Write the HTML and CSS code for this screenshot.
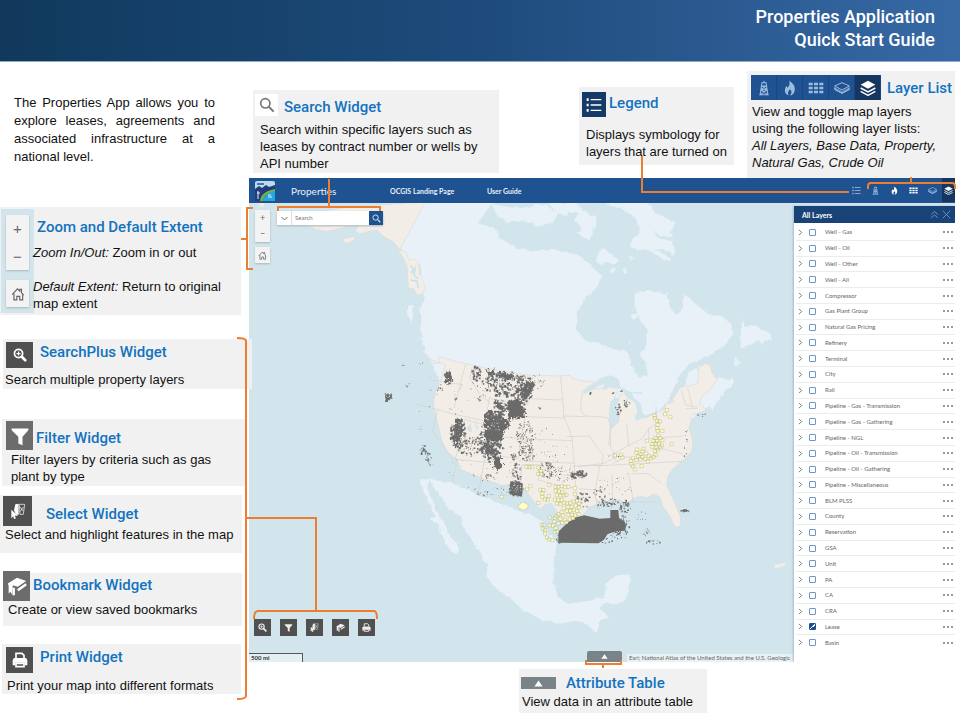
FILE: index.html
```html
<!DOCTYPE html>
<html lang="en">
<head>
<meta charset="utf-8">
<title>Properties Application Quick Start Guide</title>
<link rel="stylesheet" href="styles.css">
</head>
<body>
<svg class="symbols" aria-hidden="true">
  <symbol id="i-search" viewBox="0 0 24 24"><circle cx="9.500" cy="9.500" r="7" fill="none" stroke="currentColor" stroke-width="2.500"/><path d="M15 15l7 7" stroke="currentColor" stroke-width="3"/></symbol>
  <symbol id="i-zoomplus" viewBox="0 0 24 24"><circle cx="9.500" cy="9.500" r="7" fill="none" stroke="currentColor" stroke-width="3"/><path d="M15 15l6 6" stroke="currentColor" stroke-width="4.500" stroke-linecap="round"/><path d="M9.500 6v7M6 9.500h7" stroke="currentColor" stroke-width="2"/></symbol>
  <symbol id="i-filter" viewBox="0 0 24 24"><path d="M2 3h20v2l-7 8v10l-5-2v-8L2 5z" fill="currentColor"/></symbol>
  <symbol id="i-select" viewBox="0 0 24 24"><path d="M8 2l5-1v17l-4-1-3-6zM2 10l10 9-5 0 2 4-3 1-1-4-3 3z" fill="currentColor"/><path d="M14 2h8l-2 15h-5zM15 6l5 6M20 6l-5 7" fill="none" stroke="currentColor" stroke-width="1.500" opacity=".7"/></symbol>
  <symbol id="i-bookmark" viewBox="0 0 24 24"><path d="M1 9l11-7 11 4-10 7-6-2-1 11-2-3-2 2V12z" fill="currentColor"/><path d="M8 14v9M13 17l10-7" fill="none" stroke="currentColor" stroke-width="3"/></symbol>
  <symbol id="i-print" viewBox="0 0 24 24"><path d="M6 9V2h9l3 3v4" fill="none" stroke="currentColor" stroke-width="2.500"/><path d="M3 9h18l2 3v8h-4v-4H5v4H1v-8z" fill="currentColor"/><path d="M6 17h12v5H6z" fill="none" stroke="currentColor" stroke-width="2.500"/></symbol>
  <symbol id="i-home" viewBox="0 0 24 24"><path d="M2 13L11 3l4 4V4h3v6l4 4M5 11v11h5v-6h5v6h5V12" fill="none" stroke="currentColor" stroke-width="2"/></symbol>
  <symbol id="i-list" viewBox="0 0 24 24"><path d="M7 4h16M7 12h16M7 20h16" stroke="currentColor" stroke-width="2"/><path d="M1 2h3v4H1zM1 10h3v4H1zM1 18h3v4H1z" fill="currentColor"/></symbol>
  <symbol id="i-tower" viewBox="0 0 24 24"><path d="M9 4L6 23M15 4l3 19M7 22l9-7-8-1 7-5H9M17 22l-9-7 8-1-7-5M8 4h8M12 1v4M5 22h14" fill="none" stroke="currentColor" stroke-width="1.600"/></symbol>
  <symbol id="i-flame" viewBox="0 0 24 24"><path d="M11 1c7 5 9 9 8 15-1 5-4 7-7 7 3-3 3-6 0-9-3 3-4 6-2 9-4-1-7-5-5-11 1-4 3-3 3 0 3-3 4-6 3-11z" fill="currentColor"/></symbol>
  <symbol id="i-grid" viewBox="0 0 24 24"><path d="M1 4h6v4H1zM9 4h6v4H9zM17 4h6v4h-6zM1 10h6v4H1zM9 10h6v4H9zM17 10h6v4h-6zM1 16h6v4H1zM9 16h6v4H9zM17 16h6v4h-6z" fill="currentColor"/></symbol>
  <symbol id="i-slab" viewBox="0 0 24 24"><path d="M1 9l11-5 11 5-11 6zM1 11v3l11 6 11-6v-3M1 14l11 6 11-6" fill="none" stroke="currentColor" stroke-width="1.500"/><path d="M1 11l11 6 11-6v3l-11 6-11-6z" fill="currentColor" opacity=".6"/></symbol>
  <symbol id="i-layers" viewBox="0 0 24 24"><path d="M1 7l11-6 11 6-11 6z" fill="currentColor"/><path d="M1 12l11 6 11-6M1 17l11 6 11-6" fill="none" stroke="currentColor" stroke-width="2.200"/></symbol>
  <symbol id="i-up" viewBox="0 0 24 24"><path d="M12 4l11 16H1z" fill="currentColor"/></symbol>
  <symbol id="i-chev" viewBox="0 0 24 24"><path d="M7 3l9 9-9 9" fill="none" stroke="currentColor" stroke-width="3"/></symbol>
  <symbol id="i-down" viewBox="0 0 24 24"><path d="M2 7l10 10L22 7" fill="none" stroke="currentColor" stroke-width="3"/></symbol>
  <symbol id="i-collapse" viewBox="0 0 24 24"><path d="M3 12l9-8 9 8M3 21l9-8 9 8" fill="none" stroke="currentColor" stroke-width="2"/></symbol>
  <symbol id="i-close" viewBox="0 0 24 24"><path d="M2 2l20 20M22 2L2 22" stroke="currentColor" stroke-width="2"/></symbol>
</svg>

<header class="banner"><h1>Properties Application<br>Quick Start Guide</h1></header>

<main class="guide">
  <section class="left">
    <p class="intro">The Properties App allows you to explore leases, agreements and associated infrastructure at a national level.</p>
    <article class="card card-zoom">
      <div class="tools">
        <span class="pair"><span>+</span><span>−</span></span>
        <span class="house"><svg class="s14"><use href="#i-home"/></svg></span>
      </div>
      <div class="words">
        <h2>Zoom and Default Extent</h2>
        <p><em>Zoom In/Out:</em> Zoom in or out</p>
        <p class="later"><em>Default Extent:</em> Return to original map extent</p>
      </div>
    </article>
    <article class="card card-plus">
      <div class="head"><span class="tile"><svg class="s14"><use href="#i-zoomplus"/></svg></span><h2>SearchPlus Widget</h2></div>
      <p>Search multiple property layers</p>
    </article>
    <article class="card card-filter">
      <div class="head"><span class="tile soft"><svg class="s20"><use href="#i-filter"/></svg></span><h2>Filter Widget</h2></div>
      <p>Filter layers by criteria such as gas plant by type</p>
    </article>
    <article class="card card-select">
      <div class="head"><span class="tile"><svg class="s16"><use href="#i-select"/></svg></span><h2>Select Widget</h2></div>
      <p>Select and highlight features in the map</p>
    </article>
    <article class="card card-book">
      <div class="head"><span class="tile soft"><svg class="s20"><use href="#i-bookmark"/></svg></span><h2>Bookmark Widget</h2></div>
      <p>Create or view saved bookmarks</p>
    </article>
    <article class="card card-print">
      <div class="head"><span class="tile"><svg class="s16"><use href="#i-print"/></svg></span><h2>Print Widget</h2></div>
      <p>Print your map into different formats</p>
    </article>
  </section>

  <section class="right">
    <div class="top">
      <article class="card card-search">
        <div class="head"><span class="white"><svg class="s16"><use href="#i-search"/></svg></span><h2>Search Widget</h2></div>
        <p>Search within specific layers such as leases by contract number or wells by API number</p>
      </article>
      <article class="card card-legend">
        <div class="head"><span class="navy"><svg class="s16"><use href="#i-list"/></svg></span><h2>Legend</h2></div>
        <p>Displays symbology for layers that are turned on</p>
      </article>
      <article class="card card-layers">
        <div class="head">
          <span class="strip"><span><svg class="s16"><use href="#i-tower"/></svg></span><span><svg class="s16"><use href="#i-flame"/></svg></span><span><svg class="s16"><use href="#i-grid"/></svg></span><span><svg class="s16"><use href="#i-slab"/></svg></span><span class="on"><svg class="s16"><use href="#i-layers"/></svg></span></span>
          <h2>Layer List</h2>
        </div>
        <p>View and toggle map layers<br>using the following layer lists:<br><em>All Layers, Base Data, Property,<br>Natural Gas, Crude Oil</em></p>
      </article>
    </div>

    <div class="app">
      <div class="appbar">
        <svg class="logo" viewBox="0 0 20 20"><rect width="20" height="20" rx="2" fill="#b9dcf0"/><path d="M0 8l4-3 3 2 4-3 3 2 6-2v5L9 20H0z" fill="#243c7c"/><path d="M8 20c1-6 6-9 12-11v11z" fill="#23a9df"/><path d="M5 20c1-8 7-10 15-12v2C13 12 9 14 8 20z" fill="#69b545"/><path d="M3 10v8M2 12h3M13 16h4M13 14h3" stroke="#e6f4fb"/><path d="M2 3h7" stroke="#4a78aa" stroke-width="2"/></svg>
        <span class="brand">Properties</span>
        <a href="#landing" class="landing">OCGIS Landing Page</a>
        <a href="#user-guide">User Guide</a>
        <nav class="icons" aria-label="Map panels">
          <button aria-label="Legend"><svg class="s9"><use href="#i-list"/></svg></button>
          <button aria-label="Crude Oil"><svg class="s9"><use href="#i-tower"/></svg></button>
          <button aria-label="Natural Gas" class="lit"><svg class="s9"><use href="#i-flame"/></svg></button>
          <button aria-label="Property" class="lit"><svg class="s9"><use href="#i-grid"/></svg></button>
          <button aria-label="Base Data"><svg class="s9"><use href="#i-slab"/></svg></button>
          <button aria-label="All Layers" class="lit on"><svg class="s9"><use href="#i-layers"/></svg></button>
        </nav>
      </div>

      <div class="map">
        <svg class="canvas" viewBox="249 203 706 459" preserveAspectRatio="xMinYMin slice" role="img" aria-label="Map of leases in North America">
          <defs>
            <filter id="coast" x="-5%" y="-5%" width="110%" height="110%"><feTurbulence type="fractalNoise" baseFrequency=".05" numOctaves="3" seed="4"/><feDisplacementMap in="SourceGraphic" scale="14" xChannelSelector="R" yChannelSelector="G"/></filter>
            <filter id="ragged" x="-5%" y="-5%" width="110%" height="110%"><feTurbulence type="fractalNoise" baseFrequency=".09" numOctaves="3" seed="9"/><feDisplacementMap in="SourceGraphic" scale="26" xChannelSelector="R" yChannelSelector="G"/></filter>
          </defs>
          <rect x="249" y="203" width="1400" height="900" fill="#d3e5ec"/>
          <g transform="translate(380 200) scale(.33333)" fill="#e8f1f7">
            <g filter="url(#coast)">
            <path d="M135 5L62 147l16 22 12 35 30-14 14 96-8 30-8 12 6 34-2 28 10 32 2 36 28 44 60 160 640-40 20-20 30-45 12-35 30-22 30-5 3 26 20 14 34 2 20-2-4 16-24 26-38 54-6-12-12 4-80 60-60-20 45-100 26-50 26-24 60-24 50-40 17-28-14-32-24-16-36-4-32-26-42-34-6 46-18 14-20-24-6-40-60-8-36 6-4 34 16 44 24 36-4 44-20 22 22 44 2 28-24-2-28-36-6-38-40-4-40-20-52-12-26-34 4-48 28-48 28-22 20-40-20-14-16-20-60-36-24-4-60-6-14 6-60-8-24-14-24-10-10-24-20-14z"/>
            <path d="M334 8l40 12 50 4 70-12 40 30-18 26-40 12-36-16-60 2-34-28zM500 8h90l20 26 42 16-20 70-40-20-10-44-46-16zM650 5h150l36 40 50 22-14 34 14 54-18 30-52-30-66-10 6-28 22-16v-26l-24-30-34-20zM655 160l20-16 18 18 24 20-16 10-24-6-12 14-14-20zM692 206l14-4 4 10-16 8zM728 210l10-6 2 18-8 2zM742 166l22 6-8 8zM84 318l16-2 0 24-10 30-6-30zM120 410l24 20 20 40 12 18-22-16-26-36zM1092 350l4 30 30-4 18 12 24 10 4 26-18-4-8 16-8-14-16 10-40 10-2-30zM994 428h40l-4 6-36-2zM1066 470l8 12 10 2-16 16-6-12zM755 346l14-6 6 8-12 10zM745 424l12 4-8 8z"/>
            <path d="M560 40l34-4-8 22 20 28-10 10-34-24zM820 96l30 14 36 8-10 6-40-10zM820 146l50 8 20 28-24-10zM610 138l30 12-12 2z" fill="#d3e5ec"/>
            <path d="M1016 332l14-18-6 20zM520 70l-10 34-6-28zM445 84l-4 26-8-24z" fill="#d3e5ec"/>
            </g>
            <path d="M135 5L62 147l30 30 80 20L300 60 340 5z"/>
          </g>
          <g transform="translate(240 80) scale(.33333)" fill="#f2eee7" stroke="#d9d9d6" stroke-width="1.500">
            <path d="M556 365L480 508l-22-24-30-16-16-18-26 4-26 8-14-10 10-16-36 4-30 8-34 6-30-6-26-14-34-12-18-6 50-16 130-18z"/>
            <path d="M310 476l30-6 8 6-24 14-14-4zM45 365l24 2 8 8-12 8-8-10zM96 404l8 2-4 6z"/>
            <path d="M472 508l26 8 10 26 16-6 12 14 2 30 14 30 2 18-12 16-14-2-6-16-16 0-4-40 0-26-14-30z"/>
            <path d="M512 555l8 14-6 12M526 560l-4 26 12 10M512 600l20 4 2 20" fill="none" stroke="#c4dde6" stroke-width="4"/>
          </g>
          <g transform="translate(420 480) scale(.33333)" fill="#e8f1f7">
            <g filter="url(#coast)">
            <path d="M52 0l44 10 130 55 130 50 54 75-8 55-2 60 14 44 30 22 60-8 50-12 4-40 14-18 56-12 4 24-10 38-6 18-30 12-36-4-10 12 4 14 24 16-30 12-8 34-14-10-26-20-26-4-40 8-60-12-62-34-36-34-40-26-26-38 2-30-18-36-46-66-20-46-32-20-18-34-22-26-20-30-4 24 20 50 14 34 20 26 6 22 18 24 16 34-12 10-22-26-22-38-4-24-28-18 20-4-18-40-20-40-10-36z"/>
            </g>
            <path d="M1062 256l32-8 2 8-30 10z" fill="#f2eee7"/>
          </g>
          <g transform="translate(370 340) scale(.33333)">
            <path d="M172 55l20 16 16-2-2-20 44 14 100 22 80 13 50 8 90 2 30-2 8 10 34 8 34 2-20 12-18 16 30-6 28-4 24-8 6 8 14-6 26 10-26 10-14 32-8 28 6 24 10 12 12-8 2-26-6-32 8-24 20-8 24 6 10 28 10 20-4 20 18 4 38-20 10-22 36-4-4-10 22-36 34-6 20-6 2-46 20-14 16 8 4 20 16 22-26 34-20 14-8 24 22 18-16 6-30 8-2 24-6 14 10 30 2 24-4 20-24 24-30 26-16 22-4 26 24 54 18 44-2 30-16-2-16-34-20-28-8-26-18-10-24 12-12-6-30 8-14 18-26-16-30 4-26 6-32 14-34 40 0 30-20 6-20-18-16-34-24-36-20 4-14 14-20-26-24-32-14-18-58 4-76-28-46-20-12-30-28-22-16-32-26-108 6-40 16-32 14-50z" fill="#f2eee7" stroke="#d4d4d2" stroke-width="1.500"/>
            <path d="M672 130l20-16 30-8 24 10 6 32-34-6-22 10 8-20-20 6-22 16-26 10 10-18zM722 184l14-12 14 6-12 24 0 28 0 24-12 12-8-12-2-30zM754 146l30 10 30 0 22 36 26-2-8 26-30 16-26 12-4-12 8-16-8-30-22-12zM840 206l50-18-4 20-40 18z" fill="#d3e5ec"/>
            <path d="M786 158l40 6 12 28 50-4-20 24-40 14-10-6-6-30-20-16z" fill="#e8f1f7"/>
            <path d="M172 104l16 16 90 14-10 18M286 74l-18 70-16 60M135 190l115 32 110 24M203 210l-16 62 72 102-12 50M360 170l-18 84-58-16M284 238l-28 120 106 10M362 246l-20 122-18 102M306 82l-6 32 30 50 30 24M360 176l114 18 0-88M474 176l104 4M464 230l120 4M464 234l-10 62-104-10M454 296l154 6M454 296l-10 60-82-12M444 362l170 8M456 374l-8 96-60-6M456 374h50l0 46 50 14 60 10M572 106l10 124 24 60 10 130 2 70M636 160l-4 50 14 20-66-2M646 228l66 4 12 24-8 60M590 290l70-2 20 34 20 24-4 30-86 2M720 256l2 70 20 24-40 20-80 10M770 250l6 66 40-20 20-30 22-14M776 316l-52 30 20 22M676 378l260-14M728 370l40-20 70 10 30-36 70 18M836 266l0 30 104-8M858 200l2 72M690 376l-16 82 10 50M776 400l14 86-50 4M726 404l2 86M626 446l48 4M788 486h74M784 402l50-2 40 30M934 150l12 44 36 8M954 146l14 60M946 206h38" fill="none" stroke="#d2d1d0" stroke-width="2"/>
            <path d="M292 262l10-10 4 24-10-2zM314 238l6 18 8 8-10 2z" fill="#cfe3ed"/>
            <g fill="#6b6b6b">
              <path d="M565 575l24-24 24-18 30-7 46 10 32-2 0-24 24 0 2 24 18 12 2 26-28 2-26 8-12 18-16 10-120-2z"/>
              <path filter="url(#ragged)" d="M342 222l22-14 10 16 28 8 18 8-2 20-16 8-4 30-24-2-22 4-14-10 10-16 20-6-28-6zM416 182l38-2 12 50-26 8-26-6-2-26zM376 176l24 22 10 16-26-8zM380 96l52 6-4 16-40-8zM346 88l30 4-6 18-20-6zM350 284l40 4 0 16-40 0zM346 304l24 8 10 38-28-4zM368 348l28 4 0 34-24-4zM258 240l20-2 2 34-18 46-18-18 4-34zM460 130l34-4-12 36-20 14-8-20zM228 94l12-2 4 28-14 14zM44 164l18-4 0 14-14 6z"/>
              <path d="M421 424l37 6-2 40-38-8zM935 511l8-4 12 4-4 5-14-2z"/>
            </g>
            <path id="gaps" fill="#f2eee7"/>
            <path id="specks" fill="#6b6b6b"/>
            <path id="units" fill="#ffffc4" stroke="#9a9a72" stroke-width="1"/>
          </g>
        </svg>

        <div class="zoomer"><button aria-label="Zoom in">+</button><button aria-label="Zoom out">−</button></div>
        <button class="homebtn" aria-label="Default extent"><svg class="s9"><use href="#i-home"/></svg></button>
        <form class="finder">
          <button type="button" aria-label="Search sources"><svg class="s7"><use href="#i-down"/></svg></button>
          <input type="text" placeholder="Search" aria-label="Search">
          <button type="button" class="go" aria-label="Search"><svg class="s9"><use href="#i-search"/></svg></button>
        </form>
        <div class="dock">
          <button aria-label="SearchPlus"><svg class="s9"><use href="#i-zoomplus"/></svg></button>
          <button aria-label="Filter"><svg class="s9"><use href="#i-filter"/></svg></button>
          <button aria-label="Select"><svg class="s9"><use href="#i-select"/></svg></button>
          <button aria-label="Bookmark"><svg class="s9"><use href="#i-bookmark"/></svg></button>
          <button aria-label="Print"><svg class="s9"><use href="#i-print"/></svg></button>
        </div>
        <div class="scale">500 mi</div>
        <button class="tab" aria-label="Open attribute table"><svg class="s7"><use href="#i-up"/></svg></button>
        <div class="credit">Esri; National Atlas of the United States and the U.S. Geologic</div>

        <aside class="panel">
          <header><h3>All Layers</h3><button aria-label="Collapse all"><svg class="s9"><use href="#i-collapse"/></svg></button><button aria-label="Close"><svg class="s9"><use href="#i-close"/></svg></button></header>
          <ul id="layers"></ul>
        </aside>
      </div>
    </div>

    <article class="card card-table">
      <div class="head"><span class="grey"><svg class="s9"><use href="#i-up"/></svg></span><h2>Attribute Table</h2></div>
      <p>View data in an attribute table</p>
    </article>
  </section>

  <svg class="lines lines-left" viewBox="0 62 640 658" aria-hidden="true">
    <path d="M329 179v27M278 211v-4h102v4M241 239h6M253 208h-6v61h6M237 338q9 0 9 3v355q0 3-9 3M246 518h70v92M254 619q0-8 4-8h116q3 0 3 8M586 660v4h35v-4M603 664v4"/>
  </svg>
  <svg class="lines lines-right" viewBox="560 62 400 158" aria-hidden="true">
    <path d="M642 156v36h207M868 189v-3q0-3 3-3h81q3 0 3 3v3M911 177v6"/>
  </svg>
</main>
<script src="map.js"></script>
</body>
</html>
```
FILE: styles.css
```css
* { box-sizing: border-box; }
body { margin: 0; background: #fff; color: #111; font: 13px/17px "Liberation Sans", Arial, sans-serif; }
h1, h2, h3, p, ul { margin: 0; padding: 0; font-weight: inherit; }
button { padding: 0; border: 0; background: none; color: inherit; font: inherit; display: flex; align-items: center; justify-content: center; }
a { color: inherit; text-decoration: none; }
svg { flex: none; }
.symbols { position: absolute; width: 0; height: 0; }
.s7 { width: 7px; height: 7px; }
.s9 { width: 9px; height: 9px; }
.s14 { width: 14px; height: 14px; }
.s16 { width: 16px; height: 16px; }
.s20 { width: 20px; height: 20px; }

.banner { height: 62px; padding: 5px 25px 0 0; background: linear-gradient(90deg, #10395c, #1e4b7c 50%, #3769a5); border-bottom: 1px solid #8ba9c8; color: #fff; text-align: right; }
.banner h1 { font: 500 18px/23px Roboto, sans-serif; }

.guide { position: relative; display: grid; grid-template-columns: 249px minmax(0, 1fr); padding-right: 5px; }
.left { position: relative; z-index: 1; }
.intro { margin: 32px 34px 41px 14px; line-height: 18px; text-align: justify; }

.card { background: #f1f1f1; }
.card h2 { color: #1373c0; font: 500 15px/20px Roboto, sans-serif; white-space: nowrap; }
.head { display: flex; align-items: flex-start; }
.tile, .white, .navy { flex: none; display: flex; align-items: center; justify-content: center; width: 27px; height: 26px; background: #505050; color: #fff; }
.soft { background: #6c6c6c; height: 29px; }
.white { width: 23px; height: 22px; background: #fff; color: #777; }
.navy { width: 24px; height: 25px; background: #163a68; }

.card-zoom { display: flex; width: 241px; height: 108px; padding: 2px 0 0 1px; }
.tools { width: 33px; height: 104px; padding: 6px 5px; background: #d3e5ec; flex: none; }
.pair, .house { display: flex; flex-direction: column; align-items: center; justify-content: space-around; background: #f3f3f3; box-shadow: 0 1px 2px #a9b5ba; color: #666; width: 23px; font-size: 15px; }
.pair { height: 55px; margin-bottom: 10px; }
.house { height: 27px; }
.card-zoom .words { margin-left: -1px; padding-top: 8px; flex: 1; }
.card-zoom h2 { margin: 0 0 7px 4px; }
.card-zoom .later { margin-top: 17px; }

.card-plus { width: 249px; margin: 24px 0 0 3px; padding: 3px 2px 1px; height: 50px; }
.card-plus .head { padding-left: 1px; }
.card-plus h2 { margin-left: 7px; }
.card-plus p { margin-top: 3px; }
.card-filter { width: 243px; height: 67px; margin: 30px 0 0 2px; padding: 2px 4px; }
.card-filter h2 { margin: 7px 0 0 3px; }
.card-filter p { margin: 1px 18px 0 5px; }
.card-select { width: 242px; height: 58px; margin-top: 9px; padding: 1px 0 0 3px; }
.card-select .tile { width: 29px; height: 30px; }
.card-select h2 { margin: 8px 0 0 14px; }
.card-select p { padding-left: 2px; white-space: nowrap; }
.card-book { width: 239px; height: 53px; margin: 20px 0 0 3px; }
.card-book .tile { margin-top: -2px; height: 30px; }
.card-book h2 { margin-left: 3px; margin-top: 2px; }
.card-book p { padding-left: 5px; }
.card-print { width: 239px; height: 50px; margin: 18px 0 0 2px; padding: 3px 4px; }
.card-print h2 { margin-left: 7px; }
.card-print p { margin: 4px 0 0 1px; }

.top { display: flex; align-items: flex-start; height: 116px; }
.card-search { width: 246px; height: 83px; margin: 28px 0 0 4px; padding: 4px 2px; }
.card-search h2 { margin: 3px 0 0 6px; }
.card-search p { margin: 4px 0 0 5px; }
.card-legend { width: 155px; height: 78px; margin: 25px 0 0 auto; padding: 5px 0 0 3px; }
.card-legend h2 { margin: 1px 0 0 3px; }
.card-legend p { margin: 9px 0 0 4px; }
.card-layers { width: 208px; height: 107px; margin: 9px 0 0 13px; padding: 4px 0 0 4px; }
.card-layers h2 { margin: 3px 0 0 6px; }
.card-layers p { margin: 3px 0 0 1px; white-space: nowrap; }
.strip { display: flex; background: #1f5291; color: #9dbbe0; }
.strip span { width: 26px; height: 25px; display: flex; align-items: center; justify-content: center; border-right: 1px solid #1a467f; }
.strip .on { background: #15365f; color: #fff; }

.appbar { display: flex; align-items: center; height: 25px; padding-left: 6px; background: #1f5291; color: #e9f0f8; font: 700 7px/10px Lato, sans-serif; }
.logo { width: 20px; height: 20px; }
.brand { margin-left: 16px; width: 99px; font-size: 10px; font-weight: 400; }
.landing { width: 97px; }
.icons { display: flex; align-self: stretch; margin-left: auto; }
.icons button { width: 19px; color: #a9c4e4; }
.icons .lit { color: #fff; }
.icons .on { width: 13px; background: #15365f; margin-bottom: 1px; }

.map { position: relative; height: 459px; overflow: hidden; font: 6px/8px Lato, sans-serif; }
.canvas { display: block; width: 100%; height: 100%; }
.zoomer, .homebtn, .finder, .dock, .scale, .tab, .credit, .panel { position: absolute; }
.zoomer, .homebtn { left: 6px; width: 15px; background: #f3f3f3; box-shadow: 0 1px 2px #a9b5ba; color: #666; font-size: 9px; }
.zoomer { top: 7px; }
.zoomer button { width: 15px; height: 16px; }
.homebtn { top: 44px; height: 16px; }
.finder { left: 28px; top: 8px; display: flex; height: 14px; background: #fff; box-shadow: 0 1px 2px #a9b5ba; color: #555; }
.finder button { width: 14px; }
.finder .go { background: #1f5291; color: #dce8f5; }
.finder input { width: 78px; min-width: 0; padding: 0 3px; border: 0; border-left: 1px solid #ddd; font: inherit; background: none; }
.dock { left: 5px; bottom: 26px; display: flex; gap: 9px; }
.dock button { width: 17px; height: 17px; background: #505050; color: #eee; }
.scale { left: 0; bottom: 0; width: 54px; height: 9px; padding-left: 2px; background: #e4eff4; border: solid #555; border-width: 1px 1px 0 0; color: #333; font-weight: 700; }
.tab { left: 338px; bottom: 0; width: 35px; height: 11px; border-radius: 2px 2px 0 0; background: #788487; color: #fff; }
.credit { left: 378px; right: 161px; bottom: 0; padding-left: 2px; background: #e8f1f4; color: #666; white-space: nowrap; overflow: hidden; }

.panel { top: 3px; right: 0; bottom: 0; width: 161px; display: flex; flex-direction: column; padding-bottom: 12px; background: #fff; box-shadow: -1px 0 2px #a9b9c4; color: #666; }
.panel header { display: flex; align-items: center; height: 17px; flex: none; padding: 0 4px 0 8px; gap: 3px; background: #194377; color: #7fa8d8; }
.panel h3 { margin-right: auto; color: #fff; font-weight: 700; }
.panel ul { flex: 1; display: flex; flex-direction: column; list-style: none; margin: 2px 0 0 2px; }
.panel li { flex: 1; display: flex; align-items: center; border-bottom: 1px solid #ececec; padding: 0 1px; }
.panel li:last-child { border: 0; }
.panel li button { height: 10px; }
.panel li .more { margin-left: auto; gap: 1px; }
.more i { width: 2px; height: 2px; margin-right: 1px; background: #777; border-radius: 1px; }
.panel input { appearance: none; width: 7px; height: 7px; margin: 0 9px 0 5px; border: 1px solid #6f95c4; border-radius: 1px; }
.panel input:checked { background: #1c4f92; border-color: #1c4f92; background-image: linear-gradient(135deg, transparent 45%, #fff 45%, #fff 60%, transparent 60%); }

.card-table { width: 188px; height: 44px; margin: 7px 0 0 270px; padding: 4px 2px; }
.card-table .head { align-items: center; }
.card-table h2 { margin-left: 10px; }
.card-table p { padding-left: 1px; }
.grey { width: 35px; height: 12px; display: flex; align-items: center; justify-content: center; background: #788487; color: #fff; }

.lines { position: absolute; top: 0; z-index: 2; pointer-events: none; fill: none; stroke: #ed7d31; stroke-width: 2; }
.lines-left { left: 0; width: 640px; height: 658px; }
.lines-right { right: 0; width: 400px; height: 158px; }
```
FILE: map.js
```js
// Layer list rows
const names = ["Well - Gas", "Well - Oil", "Well - Other", "Well - All", "Compressor", "Gas Plant Group",
  "Natural Gas Pricing", "Refinery", "Terminal", "City", "Rail", "Pipeline - Gas - Transmission",
  "Pipeline - Gas - Gathering", "Pipeline - NGL", "Pipeline - Oil - Transmission", "Pipeline - Oil - Gathering",
  "Pipeline - Miscellaneous", "BLM PLSS", "County", "Reservation", "GSA", "Unit", "PA", "CA", "CRA", "Lease", "Basin"];
document.getElementById("layers").innerHTML = names.map((n, i) =>
  `<li><button aria-label="Expand ${n}"><svg class="s7"><use href="#i-chev"/></svg></button>` +
  `<input type="checkbox" id="layer${i}"${n === "Lease" ? " checked" : ""}><label for="layer${i}">${n}</label>` +
  `<button class="more" aria-label="${n} options"><i></i><i></i><i></i></button></li>`).join("");

// Seeded generator keeps the lease parcels in the same place on every load
let seed = 7;
const rnd = () => (seed = (seed * 16807) % 2147483647) / 2147483647;

// Each cluster: centre x, centre y, spread x, spread y, count, largest side
function scatter(id, clusters) {
  let d = "";
  for (const [cx, cy, rx, ry, n, s] of clusters) {
    for (let i = 0; i < n; i++) {
      const a = rnd() * 6.283, r = Math.sqrt(rnd());
      const w = 1 + rnd() * (s - 1), h = 1 + rnd() * (s - 1);
      d += `M${(cx + Math.cos(a) * r * rx - w / 2).toFixed(1)} ${(cy + Math.sin(a) * r * ry - h / 2).toFixed(1)}h${w.toFixed(1)}v${h.toFixed(1)}h-${w.toFixed(1)}z`;
    }
  }
  document.getElementById(id).setAttribute("d", d);
}

scatter("gaps", [
  [400, 105, 50, 10, 24, 4], [380, 250, 40, 40, 50, 5], [438, 447, 18, 20, 30, 4], [262, 280, 16, 40, 30, 4],
  [475, 150, 20, 24, 20, 4], [360, 330, 20, 30, 20, 4]
]);

scatter("specks", [
  [320, 100, 14, 22, 50, 7], [400, 112, 56, 12, 70, 7], [400, 150, 50, 22, 90, 8], [465, 145, 26, 40, 130, 7],
  [360, 125, 24, 16, 26, 6], [235, 112, 14, 24, 34, 6], [210, 150, 10, 8, 10, 4], [440, 205, 26, 34, 70, 7],
  [390, 205, 20, 26, 60, 8], [380, 250, 40, 36, 90, 7], [360, 300, 38, 40, 130, 8], [265, 280, 24, 46, 110, 7],
  [300, 320, 40, 30, 90, 6], [370, 335, 34, 34, 70, 7], [465, 290, 26, 50, 110, 4], [470, 340, 24, 24, 60, 5],
  [430, 350, 14, 10, 16, 6], [440, 400, 16, 30, 44, 6], [438, 447, 24, 24, 70, 6], [355, 408, 12, 8, 14, 5],
  [350, 460, 30, 10, 16, 4], [160, 330, 10, 16, 20, 6], [172, 352, 12, 14, 20, 6], [182, 370, 8, 8, 8, 4],
  [530, 390, 24, 26, 70, 5], [580, 400, 40, 26, 70, 3],
  [628, 404, 28, 12, 50, 8], [500, 125, 26, 22, 40, 3], [500, 320, 100, 60, 50, 3], [640, 480, 20, 26, 30, 6],
  [690, 470, 20, 34, 34, 5], [720, 490, 26, 16, 30, 6], [765, 500, 18, 20, 40, 6], [740, 430, 60, 40, 24, 3],
  [755, 555, 28, 30, 60, 6], [680, 600, 50, 12, 20, 6], [740, 585, 40, 14, 20, 4], [570, 595, 10, 16, 30, 5],
  [743, 208, 10, 16, 20, 6], [772, 190, 12, 12, 20, 4], [55, 170, 12, 12, 12, 6], [828, 580, 10, 16, 12, 4],
  [850, 606, 22, 6, 16, 5], [945, 513, 12, 6, 14, 5], [995, 224, 14, 6, 12, 4], [950, 290, 6, 20, 6, 4], [945, 335, 8, 16, 6, 4],
  [735, 346, 24, 8, 12, 4], [300, 400, 90, 50, 20, 3], [240, 180, 80, 60, 14, 3], [150, 250, 6, 40, 6, 3],
  [115, 138, 8, 8, 4, 4], [98, 76, 4, 3, 3, 5], [155, 72, 8, 4, 4, 3], [328, 176, 5, 8, 12, 4], [258, 176, 6, 5, 9, 4],
  [660, 160, 4, 3, 4, 5], [728, 160, 4, 3, 4, 5], [754, 155, 4, 4, 4, 5], [510, 203, 4, 5, 5, 4],
  [820, 530, 20, 20, 8, 3], [330, 150, 30, 40, 20, 3], [400, 410, 50, 50, 30, 3]
]);

// Yellow units, one square per point
const units = [
  465,376, 473,376, 482,377, 500,378, 508,388, 500,397, 508,397, 533,430, 476,434, 466,444, 506,445, 515,446, 512,456,
  512,466, 520,474, 528,474, 532,464, 500,484, 552,436, 560,436, 570,434, 580,437, 590,436, 552,448, 562,450, 572,452,
  556,460, 566,462, 576,462, 584,460, 550,474, 560,476, 570,476, 578,484, 556,486, 566,488, 586,486, 596,484, 606,480,
  616,478, 622,486, 590,496, 600,496, 612,492, 622,498, 576,500, 586,508, 596,508, 606,506, 616,508, 622,518, 570,512,
  560,518, 574,522, 590,520, 600,520, 610,522, 554,524, 566,532, 580,536, 594,534, 604,530, 550,530, 534,528, 548,540,
  560,546, 572,544, 584,542, 510,550, 516,550, 534,552, 544,552, 552,560, 514,562, 520,566, 520,576, 526,588, 532,594,
  542,596, 550,572, 556,570, 610,440, 610,458, 390,466,
  848,222, 850,230, 856,238, 864,240, 880,218, 886,206, 896,226, 858,250, 856,260, 858,268, 872,268, 860,282, 852,290,
  866,290, 846,298, 856,298, 872,296, 842,308, 852,306, 862,306, 870,312, 842,316, 854,318, 866,318, 850,328, 858,324,
  852,340, 846,346, 838,350, 832,344, 824,336, 816,322, 812,330, 806,338, 796,324, 794,334, 800,344, 812,346, 820,352,
  828,360, 806,354, 794,356, 784,350, 778,358, 780,368, 784,374, 790,384, 810,374, 748,340, 752,348, 730,342, 900,308, 826,298
];
let u = "M445 497l14-12 16 10-2 8-12 8-16-8z";
for (let i = 0; i < units.length; i += 2) u += `M${units[i]} ${units[i + 1]}h10v9h-10z`;
document.getElementById("units").setAttribute("d", u);
```
